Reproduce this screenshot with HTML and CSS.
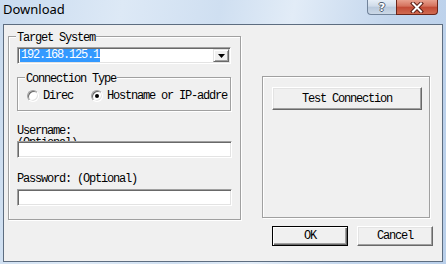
FILE: index.html
```html
<!DOCTYPE html>
<html lang="en">
<head>
    <meta charset="UTF-8">
    <title>Download</title>
    <link rel="stylesheet" href="styles.css">
</head>
<body>
    <div class="window">
        <div class="titlebar">
            <span class="title">Download</span>
            <div class="caption-buttons">
                <span class="cap help">?</span>
                <span class="cap close">
                    <svg width="14" height="11" viewBox="0 0 14 11">
                        <path d="M3 1.5 L11 9.5 M11 1.5 L3 9.5" stroke="#5b1f16" stroke-width="4" stroke-linecap="square"/>
                        <path d="M3 1.5 L11 9.5 M11 1.5 L3 9.5" stroke="#fff" stroke-width="2" stroke-linecap="square"/>
                    </svg>
                </span>
            </div>
        </div>

        <div class="client">
            <!-- Target System -->
            <div class="group target">
                <span class="legend">Target System</span>
                <div class="combo">
                    <span class="sel">192.168.125.1</span>
                    <span class="drop">
                        <svg width="7" height="4" viewBox="0 0 7 4"><polygon points="0,0 7,0 3.5,4" fill="#000"/></svg>
                    </span>
                </div>

                <div class="group conn">
                    <span class="legend">Connection Type</span>
                    <div class="radio-row">
                        <span class="radio"></span>
                        <span class="radio-label">Direc</span>
                        <span class="radio checked"></span>
                        <span class="radio-label clipped">Hostname or IP-address</span>
                    </div>
                </div>

                <div class="field-label user">Username:<br>(Optional)</div>
                <div class="edit"></div>
                <div class="field-label pass">Password: (Optional)</div>
                <div class="edit"></div>
            </div>

            <div class="right-col">
                <div class="group actions">
                    <button class="btn test">Test Connection</button>
                </div>
                <div class="dialog-buttons">
                    <button class="btn default">OK</button>
                    <button class="btn">Cancel</button>
                </div>
            </div>
        </div>
    </div>
</body>
</html>
```

FILE: styles.css
```css
body {
    margin: 0;
    background-color: #c4d8ee;
    font-family: "Liberation Mono", monospace;
    font-size: 12px;
    letter-spacing: -1.2px;
    color: #000;
}

.window {
    width: 446px;
    height: 264px;
    background: linear-gradient(100deg, #c9dbef 0%, #dde9f6 25%, #cfdff1 45%, #e2ecf7 60%, #c3d6ed 80%, #b9cfea 100%);
}

.titlebar {
    height: 24px;
    display: flex;
    justify-content: space-between;
    align-items: flex-start;
}

.title {
    font-family: "Noto Sans", sans-serif;
    font-size: 13px;
    letter-spacing: 0;
    line-height: 16px;
    padding: 1px 0 0 3px;
}

.caption-buttons {
    display: flex;
    margin-right: 8px;
}

.cap {
    height: 15px;
    box-sizing: border-box;
    display: flex;
    align-items: center;
    justify-content: center;
}

.help {
    width: 29px;
    border: 1px solid #71839a;
    border-top: none;
    border-right: none;
    border-radius: 0 0 0 4px;
    background: linear-gradient(#e6eef7, #cfdbe9 45%, #b9c9dc 50%, #cbd8e7);
    font-family: "DejaVu Sans", sans-serif;
    font-weight: bold;
    font-size: 11px;
    letter-spacing: 0;
    color: #fff;
    text-shadow: 1px 0 #4d5c6e, -1px 0 #4d5c6e, 0 1px #4d5c6e, 0 -1px #4d5c6e;
}

.close {
    width: 42px;
    border: 1px solid #6b2519;
    border-top: none;
    border-radius: 0 0 4px 0;
    background: linear-gradient(#e8a08e, #d4715c 45%, #c24a35 50%, #d06a50);
}

.client {
    margin-left: 3px;
    width: 440px;
    height: 238px;
    box-sizing: border-box;
    border: 1px solid #5d6d80;
    background-color: #f0f0f0;
    display: flex;
    align-items: flex-start;
    padding: 11px 0 0 4px;
}

/* group boxes */
.group {
    position: relative;
    box-sizing: border-box;
    border: 1px solid #a0a0a0;
    box-shadow: inset 1px 1px #fff, 1px 1px #fff;
}

.legend {
    position: absolute;
    top: -5px;
    left: 7px;
    padding: 0 1px;
    line-height: 12px;
    background-color: #f0f0f0;
    white-space: nowrap;
}

.target {
    width: 233px;
    height: 184px;
    padding-left: 8px;
    display: flex;
    flex-direction: column;
}

.combo {
    margin-top: 10px;
    width: 214px;
    height: 17px;
    box-sizing: border-box;
    padding: 1px;
    display: flex;
    background-color: #fff;
    border: 1px solid;
    border-color: #a0a0a0 #fff #fff #a0a0a0;
    box-shadow: inset 1px 1px #696969, inset -1px -1px #e3e3e3;
}

.sel {
    margin-left: 1px;
    padding: 0 1px;
    line-height: 13px;
    background-color: #3399ff;
    color: #fff;
}

.drop {
    margin-left: auto;
    width: 16px;
    height: 13px;
    box-sizing: border-box;
    display: flex;
    align-items: center;
    justify-content: center;
    background-color: #f0f0f0;
    border: 1px solid;
    border-color: #e3e3e3 #696969 #696969 #e3e3e3;
    box-shadow: inset 1px 1px #fff, inset -1px -1px #a0a0a0;
}

.drop svg {
    display: block;
}

.conn {
    margin-top: 13px;
    width: 214px;
    height: 34px;
}

.radio-row {
    display: flex;
    align-items: center;
    margin: 12px 0 0 9px;
}

.radio {
    position: relative;
    width: 12px;
    height: 12px;
    box-sizing: border-box;
    border-radius: 50%;
    background-color: #fff;
    border: 1px solid;
    border-color: #a0a0a0 #fff #fff #a0a0a0;
    box-shadow: inset 1px 1px #696969, inset -1px -1px #e3e3e3;
}

.radio.checked::after {
    content: "";
    position: absolute;
    left: 3px;
    top: 3px;
    width: 4px;
    height: 4px;
    border-radius: 50%;
    background-color: #000;
}

.radio-label {
    margin-left: 4px;
    margin-right: 18px;
    line-height: 12px;
    white-space: nowrap;
}

.radio-label.clipped {
    width: 121px;
    margin-right: 0;
    overflow: hidden;
}

.field-label {
    line-height: 12px;
    white-space: nowrap;
}

.field-label.user {
    margin-top: 14px;
    height: 16px;
    overflow: hidden;
}

.field-label.pass {
    margin-top: 15px;
    margin-bottom: 4px;
}

.edit {
    width: 215px;
    height: 17px;
    box-sizing: border-box;
    background-color: #fff;
    border: 1px solid;
    border-color: #a0a0a0 #fff #fff #a0a0a0;
    box-shadow: inset 1px 1px #696969, inset -1px -1px #e3e3e3;
}

/* right side */
.right-col {
    margin-left: 21px;
    display: flex;
    flex-direction: column;
}

.actions {
    margin-top: 40px;
    width: 168px;
    height: 142px;
    padding: 10px 0 0 9px;
}

.btn {
    font: inherit;
    letter-spacing: -1.2px;
    color: #000;
    padding: 0;
    line-height: 12px;
    background-color: #f0f0f0;
    border: 1px solid;
    border-color: #fff #696969 #696969 #fff;
    box-shadow: inset -1px -1px #a0a0a0, inset 1px 1px #e3e3e3;
    box-sizing: border-box;
}

.test {
    width: 150px;
    height: 23px;
}

.dialog-buttons {
    display: flex;
    gap: 9px;
    margin: 8px 0 0 10px;
}

.dialog-buttons .btn {
    width: 76px;
    height: 20px;
}

.btn.default {
    border-color: #000;
    box-shadow: inset 1px 1px #fff, inset -1px -1px #696969, inset -2px -2px #a0a0a0;
}
```
